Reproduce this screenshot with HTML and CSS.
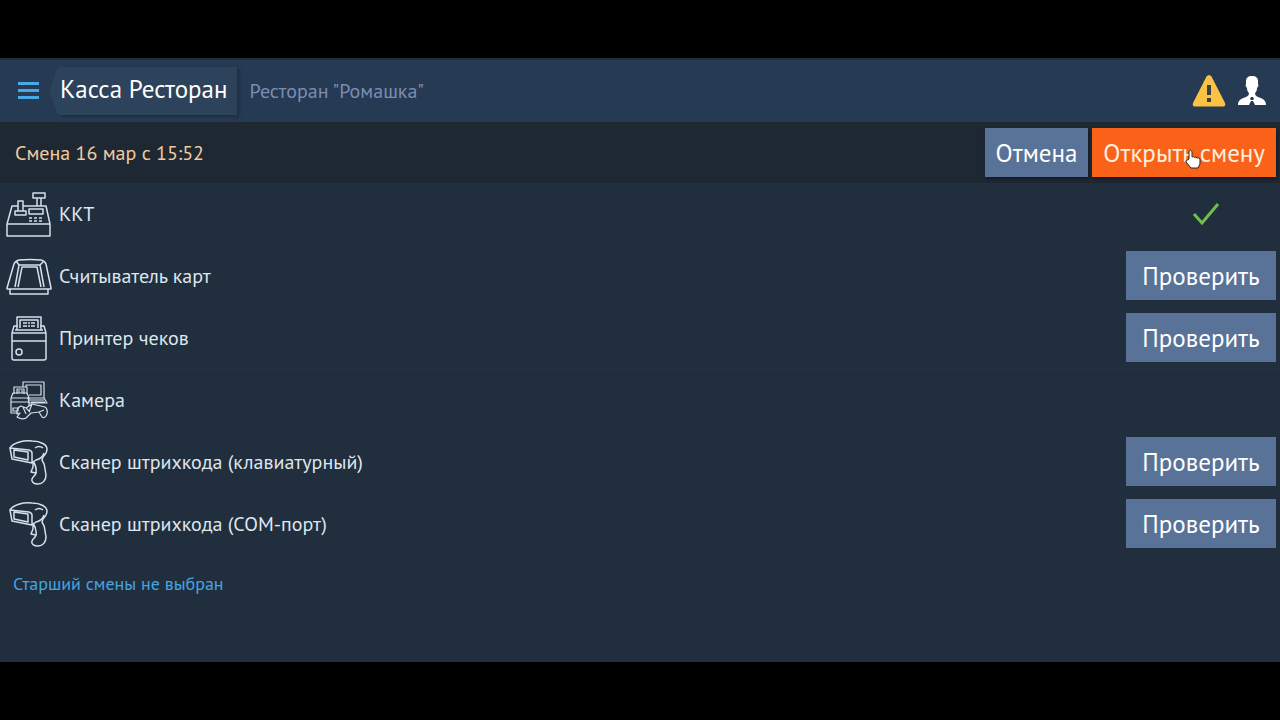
FILE: index.html
```html
<!DOCTYPE html>
<html lang="ru">
<head>
    <meta charset="UTF-8">
    <meta name="viewport" content="width=device-width, initial-scale=1.0">
    <title>Касса Ресторан</title>
    <link rel="stylesheet" href="styles.css">
</head>
<body>
    <!-- общие иконки -->
    <svg class="sprite" aria-hidden="true">
        <symbol id="scanner" viewBox="0 0 48 48">
            <path d="M5 10C8 5 18 2 27 3c9 0 15 4 15 8 0 3-2 6-4 8l-1 3c2 3 3 5 3 9l1 6c0 5-3 9-8 9-4 0-7-2-6-5 1-3 4-3 4-7"/>
            <path d="M5 10l19 2q3 1 3 3v10L7 21zM9 12l14 2v8L9 19z"/>
            <path d="M30 10q4-3 8 0M27 25l4-3c4-1 7-3 8-7M28 23v6l-2 5 5 1q1-6-3-12"/>
        </symbol>
    </svg>
    <div class="screen">
        <header class="header">
            <button class="menu" aria-label="Меню"><span></span><span></span><span></span></button>
            <h1 class="title">
                <svg class="title-edge" viewBox="0 0 10 48" preserveAspectRatio="none" aria-hidden="true"><path d="M10 0L7 2L0 22v4l7 20 3 2z"/></svg>
                Касса Ресторан
            </h1>
            <span class="place">Ресторан "Ромашка"</span>
            <button class="head-btn" aria-label="Предупреждения">
                <svg width="34" height="32" viewBox="0 0 34 32">
                    <path fill="#fac344" d="M14.500 1.500Q17-1.500 19.500 1.500L33 28Q34 31.500 30.500 31.500H3.500Q0 31.500 1 28z"/>
                    <path fill="#3b4046" d="M15 10h4v10h-4zM15 23h4v4h-4z"/>
                </svg>
            </button>
            <button class="head-btn" aria-label="Пользователь">
                <svg width="30" height="30" viewBox="0 0 30 30">
                    <path fill="#fff" d="M15 0c4 0 6 2 6 5v3c1 1 0 3-1 4 0 3-1 4-2 5 0 2 1 3 3 4 6 2 8 4 8 8H18l-2-4h-2l-2 4H1c0-4 2-6 8-8 2-1 3-2 3-4-1-1-2-2-2-5-1-1-2-3-1-4V5c0-3 2-5 6-5z"/>
                    <path fill="#263a53" d="M14 21h2l1 2-1 1h-2l-1-1z"/>
                </svg>
            </button>
        </header>
        <div class="shift">
            <span class="shift-name">Смена 16 мар с 15:52</span>
            <button class="btn">Отмена</button>
            <button class="btn open">Открыть смену
                <svg class="cursor" viewBox="0 0 16 20" aria-hidden="true"><path d="M4 10V2.500Q5.500 0 7 2.500V8q1.500-1 2.500.5 1.500-1 2.500.5 2-.8 3 1v5l-2 4H6L1 13q-.5-2 1.500-2z"/></svg>
            </button>
        </div>
        <ul class="devices">
            <li>
                <svg class="ico" viewBox="0 0 48 48" aria-hidden="true">
                    <path d="M2 34h43v12H2zM2 34L7 16h6M18 16h23l4 18M28 3h12v5H28zM32 8v8M36 8v8"/>
                    <path d="M13 11h5v10h-5zM13 21h-3v4h11v-4h-3M24 19h14v5H24z"/>
                    <path stroke-dasharray="3 2" d="M24 28h14M24 31h14"/>
                </svg>
                <span class="name">ККТ</span>
                <svg class="check" viewBox="0 0 28 24" role="img" aria-label="Проверено"><path d="M2 12l8 9L26 2"/></svg>
            </li>
            <li>
                <svg class="ico" viewBox="0 0 48 48" aria-hidden="true">
                    <path d="M2 36L9 12Q10 9 14 8Q25 7 36 8Q40 9 41 12L46 36v1H2zM5 37v5h38v-5"/>
                    <path d="M10 35l4-22h21l4 22M13 35l4-20h15l4 20M11 9l3 4M39 9l-4 4"/>
                </svg>
                <span class="name">Считыватель карт</span>
                <button class="btn">Проверить</button>
            </li>
            <li>
                <svg class="ico" viewBox="0 0 48 48" aria-hidden="true">
                    <path d="M7 19h34v25q0 2-2 2H9q-2 0-2-2zM7 27h34M7 19l2-7h4M35 12h4l2 7"/>
                    <path d="M12 16V3h24v13M15 14V6h18v8M10 16h28"/>
                    <path stroke-dasharray="4 1 2 1" d="M18 9h12M18 12h12"/>
                    <circle cx="14" cy="38" r="3"/>
                </svg>
                <span class="name">Принтер чеков</span>
                <button class="btn">Проверить</button>
            </li>
            <li>
                <svg class="ico thin" viewBox="0 0 48 48" aria-hidden="true">
                    <path d="M18 11V6h21v16H23M21 11V9h15v10H24M23 22h16l3 5H24zM25 24h14M26 26h14"/>
                    <path d="M9 18v-7h13v7M12 18v-5h7v5M14 14v3M17 14v3M6 22l2-5h14l2 5M6 22h18v8M6 22v15h7M6 26h18M8 32h5v3H8z"/>
                    <path d="M12 38q-1-6 4-8l5 2 6-4 13 3q3 2 2 7-2 5-5 3l-3-5-8 1-5 5q-4 2-9-1l3-4zM18 31l3 7M21 32l4 4M27 28l-3 8M34 36l5-2"/>
                </svg>
                <span class="name">Камера</span>
            </li>
            <li>
                <svg class="ico" aria-hidden="true"><use href="#scanner"/></svg>
                <span class="name">Сканер штрихкода (клавиатурный)</span>
                <button class="btn">Проверить</button>
            </li>
            <li>
                <svg class="ico" aria-hidden="true"><use href="#scanner"/></svg>
                <span class="name">Сканер штрихкода (COM-порт)</span>
                <button class="btn">Проверить</button>
            </li>
        </ul>
        <a class="senior" href="#">Старший смены не выбран</a>
    </div>
</body>
</html>
```
FILE: styles.css
```css
*{
    box-sizing: border-box;
}
body{
    margin: 0;
    padding: 58px 0;
    min-height: 100vh;
    display: flex;
    background: #000;
    font-family: "PT Sans", "Noto Sans", sans-serif;
    font-size: 20px;
    color: #dfe6ee;
}
button{
    font-family: inherit;
    border: none;
    cursor: pointer;
}
.sprite{
    position: absolute;
    width: 0;
    height: 0;
}
.screen{
    flex: 1;
    background: #212e3d;
}
.header{
    display: flex;
    align-items: center;
    height: 64px;
    padding-right: 13px;
    border-top: 2px solid #202c39;
    background: #263a53;
}
.menu{
    display: flex;
    flex-direction: column;
    gap: 4px;
    width: 50px;
    padding: 0 11px 2px 18px;
    background: none;
}
.menu span{
    height: 3px;
    background: #44a9e5;
}
.title{
    position: relative;
    height: 48px;
    margin: 0 0 0 10px;
    padding-right: 10px;
    line-height: 44px;
    font-size: 25px;
    font-weight: normal;
    color: #fff;
    background: #2d425b;
    box-shadow: 2px 2px 3px #1d2d42;
}
.title-edge{
    position: absolute;
    right: 100%;
    top: 0;
    width: 10px;
    height: 100%;
    fill: #2d425b;
}
.place{
    flex: 1;
    margin-left: 12px;
    color: #7d8db0;
}
.head-btn{
    display: flex;
    margin-left: 11px;
    padding: 0;
    background: none;
}
.shift{
    display: flex;
    align-items: center;
    gap: 4px;
    height: 61px;
    padding: 0 4px 0 15px;
    background: #1e2833;
}
.shift-name{
    flex: 1;
    color: #f1cba0;
}
.btn{
    position: relative;
    height: 49px;
    padding: 0 11px;
    font-size: 25px;
    line-height: 46px;
    color: #fff;
    background: #587298;
}
.shift .btn{
    box-shadow: 1px 2px 3px #141b24;
}
.shift .open{
    color: #ffeedd;
    background: #fa621a;
}
.cursor{
    position: absolute;
    left: 93px;
    top: 21px;
    width: 16px;
    height: 20px;
    fill: #fff;
    stroke: #222;
    stroke-width: 1;
}
.devices{
    margin: 0;
    padding: 0;
    list-style: none;
}
.devices li{
    display: flex;
    align-items: center;
    height: 62px;
    padding: 0 4px 0 5px;
    border-bottom: 1px solid #243140;
}
.devices .btn{
    width: 150px;
}
.ico{
    width: 48px;
    height: 48px;
    fill: none;
    stroke: #d5e0ea;
    stroke-width: 1.5;
    stroke-linejoin: round;
}
.thin{
    stroke-width: 1.2;
}
.name{
    flex: 1;
    margin-left: 6px;
}
.check{
    width: 28px;
    height: 24px;
    margin-right: 56px;
    fill: none;
    stroke: #6fbf4a;
    stroke-width: 3;
}
.senior{
    display: inline-block;
    padding: 17px 13px;
    font-size: 18px;
    color: #43a5e2;
    text-decoration: none;
}
```
